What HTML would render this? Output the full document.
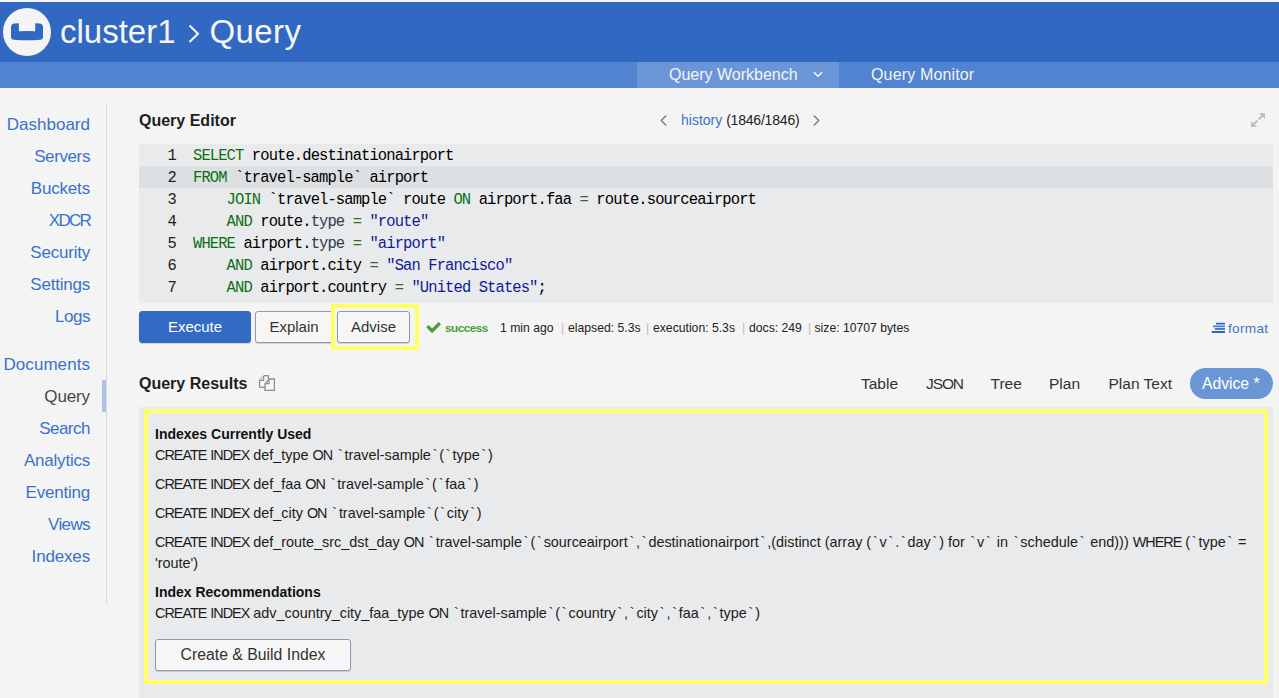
<!DOCTYPE html>
<html><head><meta charset="utf-8">
<style>
*{box-sizing:border-box;margin:0;padding:0}
html,body{width:1279px;height:698px;overflow:hidden;background:#f4f4f4;font-family:"Liberation Sans",sans-serif;position:relative}
.abs{position:absolute}
#topstrip{left:0;top:0;width:1279px;height:2px;background:#f4f4f4}
#hdr{left:0;top:2px;width:1279px;height:60px;background:#3169c2}
#sub{left:0;top:62px;width:1279px;height:26px;background:#5083d0}
#subhl{left:637px;top:62px;width:202px;height:26px;background:#6a96d8}
.t{position:absolute;white-space:nowrap;line-height:1}
.nav{position:absolute;right:1189px;margin-top:0.7px;white-space:nowrap;font-size:17px;color:#3a72c8;line-height:1}
#vline{left:106px;top:104px;width:1px;height:500px;background:#dcdcdc}
#ind{left:102px;top:380px;width:4px;height:32px;background:#a9c4e6}
#editor{left:139px;top:144px;width:1134px;height:159px;background:#e9eaec}
#l2{left:139px;top:166px;width:1134px;height:22px;background:#dde0e3}
.code{position:absolute;left:139px;width:1134px;height:22px;font-family:"Liberation Mono",monospace;font-size:15.5px;letter-spacing:-0.9px;white-space:pre;line-height:22px;color:#000}
.code .n{position:absolute;top:1px;left:0;transform:scaleY(1.07);transform-origin:0 15.1px;width:37px;text-align:right;color:#222}
.code .c{position:absolute;top:1px;left:54px;transform:scaleY(1.07);transform-origin:0 15.1px}
.k{color:#0e6e12}
.s{color:#101a96}
.p{color:#2f6a34}
.ty{color:#2c3c4c}
.btn{position:absolute;height:32px;border:1px solid #8a9ab0;border-radius:3px;background:#f6f6f6;box-shadow:0 1px 1px rgba(0,0,0,.15);font-size:15px;color:#333;text-align:center;line-height:30px}
#exec{left:139px;top:311px;width:112px;background:#336bc4;border-color:#336bc4;color:#fff}
#results{left:139px;top:407px;width:1134px;height:291px;background:#e9eaec}
.st{top:322.4px;font-size:12.2px;color:#222}
.sep{color:#bbb}
.tab{top:376px;font-size:15.5px;color:#333}
.u{letter-spacing:-1px}
.b{margin:0 1.8px}
.yel{position:absolute;border:4px solid #ffff66}
</style></head>
<body>
<div id="topstrip" class="abs"></div>
<div id="hdr" class="abs"></div>
<div id="sub" class="abs"></div>
<div id="subhl" class="abs"></div>

<!-- logo -->
<svg class="abs" style="left:0;top:0" width="60" height="62" viewBox="0 0 60 62">
  <circle cx="27" cy="32" r="24" fill="#f4f4f4"/>
  <path d="M11 27.2 Q11 23.6 14.6 23.4 L18.9 23.2 L18.9 31.2 Q27 30.8 35.2 31.2 L35.2 23.2 L39.4 23.4 Q43 23.6 43 27.2 L43 37 Q43 39.4 40.2 39.7 Q27 40.7 13.8 39.7 Q11 39.4 11 37 Z" fill="#3169c2"/>
</svg>

<div class="t" style="left:60px;top:15.1px;font-size:33px;color:#f6f6f6">cluster1</div>
<svg class="abs" style="left:187px;top:24px" width="14" height="22" viewBox="0 0 14 22"><path d="M2.5 1.5 L11 9.8 L2.5 18" fill="none" stroke="#f6f6f6" stroke-width="2.1"/></svg>
<div class="t" style="left:209.5px;top:15.1px;font-size:33px;letter-spacing:0.4px;color:#f6f6f6">Query</div>

<div class="t" style="left:669px;top:67.1px;font-size:16px;color:#f4f4f4">Query Workbench</div>
<svg class="abs" style="left:813px;top:71px" width="10" height="7" viewBox="0 0 10 7"><path d="M1 1.2 L5 5.2 L9 1.2" fill="none" stroke="#fff" stroke-width="1.4"/></svg>
<div class="t" style="left:871px;top:67.1px;font-size:16px;letter-spacing:0.15px;color:#f4f4f4">Query Monitor</div>

<!-- sidebar -->
<div class="nav" style="top:115.7px;letter-spacing:0.01px">Dashboard</div>
<div class="nav" style="top:147.6px;letter-spacing:-0.39px">Servers</div>
<div class="nav" style="top:179.6px;letter-spacing:-0.17px">Buckets</div>
<div class="nav" style="top:211.6px;letter-spacing:-1.75px">XDCR</div>
<div class="nav" style="top:243.6px;letter-spacing:-0.22px">Security</div>
<div class="nav" style="top:275.6px;letter-spacing:-0.22px">Settings</div>
<div class="nav" style="top:307.6px;letter-spacing:-0.47px">Logs</div>
<div class="nav" style="top:355.4px;letter-spacing:0.06px">Documents</div>
<div class="nav" style="top:387.2px;color:#484848;letter-spacing:-0.12px">Query</div>
<div class="nav" style="top:419.4px;letter-spacing:-0.50px">Search</div>
<div class="nav" style="top:451.6px;letter-spacing:-0.22px">Analytics</div>
<div class="nav" style="top:483.6px;letter-spacing:-0.21px">Eventing</div>
<div class="nav" style="top:515.6px;letter-spacing:-0.62px">Views</div>
<div class="nav" style="top:547.6px;letter-spacing:-0.16px">Indexes</div>
<div id="vline" class="abs"></div>
<div id="ind" class="abs"></div>

<!-- editor header -->
<div class="t" style="left:139px;top:112.8px;font-size:16px;font-weight:bold;color:#1e1e1e">Query Editor</div>
<svg class="abs" style="left:659px;top:114px" width="10" height="13" viewBox="0 0 10 13"><path d="M7.3 1.5 L2.2 6.5 L7.3 11.5" fill="none" stroke="#7a7a7a" stroke-width="1.3"/></svg>
<div class="t" style="left:681px;top:113px;font-size:14px;color:#3a72c8">history <span style="color:#222;letter-spacing:-0.2px">(1846/1846)</span></div>
<svg class="abs" style="left:811px;top:114px" width="10" height="13" viewBox="0 0 10 13"><path d="M2.7 1.5 L7.8 6.5 L2.7 11.5" fill="none" stroke="#7a7a7a" stroke-width="1.3"/></svg>
<svg class="abs" style="left:1250px;top:112px" width="16" height="16" viewBox="0 0 16 16" fill="#bdbdbd">
  <path d="M9 1 H15 V7 Z"/><path d="M12.5 3.5 L8.6 7.4" stroke="#bdbdbd" stroke-width="2"/>
  <path d="M1 15 V9 L7 15 Z"/><path d="M3.5 12.5 L7.4 8.6" stroke="#bdbdbd" stroke-width="2"/>
</svg>

<!-- editor -->
<div id="editor" class="abs"></div>
<div id="l2" class="abs"></div>
<div class="code" style="top:144px"><span class="n">1</span><span class="c"><span class="k">SELECT</span> route.destinationairport</span></div>
<div class="code" style="top:166px"><span class="n">2</span><span class="c"><span class="k">FROM</span> `travel-sample` airport</span></div>
<div class="code" style="top:188px"><span class="n">3</span><span class="c">    <span class="k">JOIN</span> `travel-sample` route <span class="k">ON</span> airport.faa <span class="p">=</span> route.sourceairport</span></div>
<div class="code" style="top:210px"><span class="n">4</span><span class="c">    <span class="k">AND</span> route.<span class="ty">type</span> <span class="p">=</span> <span class="s">"route"</span></span></div>
<div class="code" style="top:232px"><span class="n">5</span><span class="c"><span class="k">WHERE</span> airport.<span class="ty">type</span> <span class="p">=</span> <span class="s">"airport"</span></span></div>
<div class="code" style="top:254px"><span class="n">6</span><span class="c">    <span class="k">AND</span> airport.city <span class="p">=</span> <span class="s">"San Francisco"</span></span></div>
<div class="code" style="top:276px"><span class="n">7</span><span class="c">    <span class="k">AND</span> airport.country <span class="p">=</span> <span class="s">"United States"</span>;</span></div>

<!-- buttons -->
<div id="exec" class="btn">Execute</div>
<div class="btn" style="left:255px;top:311px;width:78px">Explain</div>
<div class="btn" style="left:337px;top:311px;width:73px">Advise</div>
<div class="yel" style="left:331px;top:304px;width:88px;height:46px"></div>

<!-- status -->
<svg class="abs" style="left:426px;top:321px" width="16" height="13" viewBox="0 0 16 13"><path d="M2.6 4 L6.1 7.4 L12.6 0.9 L15 3.3 L6.1 12.2 L0.2 6.3 Z" fill="#45a039"/></svg>
<div class="t" style="left:445px;top:322.6px;font-size:11.8px;font-weight:bold;letter-spacing:-0.55px;color:#4a9e3c">success</div>
<div class="t st" style="left:500px">1 min ago</div>
<div class="t st sep" style="left:561px">|</div>
<div class="t st" style="left:568px">elapsed: 5.3s</div>
<div class="t st sep" style="left:646px">|</div>
<div class="t st" style="left:653px">execution: 5.3s</div>
<div class="t st sep" style="left:742px">|</div>
<div class="t st" style="left:749px">docs: 249</div>
<div class="t st sep" style="left:808px">|</div>
<div class="t st" style="left:814.5px">size: 10707 bytes</div>
<svg class="abs" style="left:1211px;top:322px" width="14" height="12" viewBox="0 0 14 12" fill="#2f66c4"><rect x="5" y="0.8" width="9" height="1.7"/><rect x="1.9" y="3.5" width="12.1" height="1.7" opacity="0.85"/><rect x="3.8" y="6.1" width="10.2" height="1.7"/><rect x="0.7" y="9" width="13.3" height="2"/></svg>
<div class="t" style="left:1228px;top:321.6px;font-size:13.6px;letter-spacing:0.3px;color:#3f76c9">format</div>

<!-- results header -->
<div class="t" style="left:139px;top:375.6px;font-size:16px;font-weight:bold;color:#1e1e1e">Query Results</div>
<svg class="abs" style="left:250px;top:368px" width="35" height="30" viewBox="0 0 35 30" fill="none" stroke="#8e8e8e" stroke-width="1.3" stroke-linejoin="round">
<path d="M9.6 19.3 V12.3 L14.3 7.6 H18.4 V11.6" fill="#f6f6f6"/><path d="M9.6 19.3 H14.8"/><path d="M9.6 12.3 H13.6 V8.3" fill="#f6f6f6"/>
<path d="M15 22.4 V15.6 L19.6 11 H24.4 V22.4 Z" fill="#f6f6f6"/><path d="M15 15.6 H19 V11.6"/>
</svg>

<div class="t tab" style="left:861px;color:#333">Table</div>
<div class="t tab" style="left:926px;color:#333;letter-spacing:-1.1px">JSON</div>
<div class="t tab" style="left:990.5px;color:#333">Tree</div>
<div class="t tab" style="left:1049px;color:#333">Plan</div>
<div class="t tab" style="left:1108.5px;color:#333">Plan Text</div>
<div class="abs" style="left:1190px;top:368px;width:83px;height:31px;border-radius:16px;background:#6a96d5"></div>
<div class="t tab" style="left:1202px;color:#fff;font-size:15.7px">Advice *</div>

<!-- results -->
<div id="results" class="abs"></div>
<div class="yel" style="left:144px;top:409px;width:1124px;height:275px"></div>
<div class="t" style="left:155px;top:427px;font-size:14px;font-weight:bold;color:#111">Indexes Currently Used</div>
<div class="t" style="left:155px;top:448px;font-size:14.4px;color:#1c1c1c"><span class="u">CREATE</span> <span class="u">INDEX</span> def_type <span class="u">ON</span> <span class="b">`</span>travel-sample<span class="b">`</span>(<span class="b">`</span>type<span class="b">`</span>)</div>
<div class="t" style="left:155px;top:477px;font-size:14.4px;color:#1c1c1c"><span class="u">CREATE</span> <span class="u">INDEX</span> def_faa <span class="u">ON</span> <span class="b">`</span>travel-sample<span class="b">`</span>(<span class="b">`</span>faa<span class="b">`</span>)</div>
<div class="t" style="left:155px;top:506px;font-size:14.4px;color:#1c1c1c"><span class="u">CREATE</span> <span class="u">INDEX</span> def_city <span class="u">ON</span> <span class="b">`</span>travel-sample<span class="b">`</span>(<span class="b">`</span>city<span class="b">`</span>)</div>
<div class="t" style="left:155px;top:535px;font-size:14.4px;color:#1c1c1c"><span class="u">CREATE</span> <span class="u">INDEX</span> def_route_src_dst_day <span class="u">ON</span> <span class="b">`</span>travel-sample<span class="b">`</span>(<span class="b">`</span>sourceairport<span class="b">`</span>,<span class="b">`</span>destinationairport<span class="b">`</span>,(distinct (array (<span class="b">`</span>v<span class="b">`</span>.<span class="b">`</span>day<span class="b">`</span>) for <span class="b">`</span>v<span class="b">`</span> in <span class="b">`</span>schedule<span class="b">`</span> end))) <span class="u">WHERE</span> (<span class="b">`</span>type<span class="b">`</span> =</div>
<div class="t" style="left:155px;top:556px;font-size:14.4px;color:#1c1c1c">'route')</div>
<div class="t" style="left:155px;top:585px;font-size:14px;font-weight:bold;color:#111">Index Recommendations</div>
<div class="t" style="left:155px;top:606px;font-size:14.4px;color:#1c1c1c"><span class="u">CREATE</span> <span class="u">INDEX</span> adv_country_city_faa_type <span class="u">ON</span> <span class="b">`</span>travel-sample<span class="b">`</span>(<span class="b">`</span>country<span class="b">`</span>,<span class="b">`</span>city<span class="b">`</span>,<span class="b">`</span>faa<span class="b">`</span>,<span class="b">`</span>type<span class="b">`</span>)</div>
<div class="btn" style="left:155px;top:639px;width:196px;height:32px;font-size:15.8px">Create &amp; Build Index</div>

</body></html>
